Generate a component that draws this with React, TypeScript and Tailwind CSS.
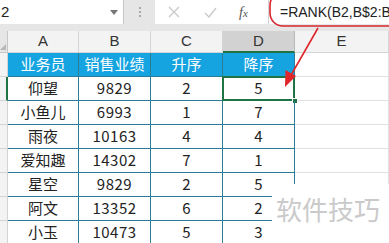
import React from 'react';

const rows = [
  ['仰望', '9829', '2', '5'],
  ['小鱼儿', '6993', '1', '7'],
  ['雨夜', '10163', '4', '4'],
  ['爱知趣', '14302', '7', '1'],
  ['星空', '9829', '2', '5'],
  ['阿文', '13352', '6', '2'],
  ['小玉', '10473', '5', '3'],
];

const font = { fontFamily: '"Noto Sans CJK SC", "Liberation Sans", sans-serif' };
const latin = { fontFamily: '"Liberation Sans", sans-serif' };

export default function App() {
  return (
    <div className="relative w-[389px] h-[243px] overflow-hidden bg-white" style={font}>
      {/* formula bar */}
      <div className="flex h-[31px] bg-[#e6e6e6] pb-[7px]">
        <div className="w-[124px] shrink-0 bg-white border-r border-[#c6c6c6] flex items-center justify-between pl-[1px] pr-[5px]">
          <span className="text-[15px] text-[#222]" style={latin}>2</span>
          <span className="w-0 h-0 border-l-[4px] border-r-[4px] border-t-[5px] border-l-transparent border-r-transparent border-t-[#777]" />
        </div>
        <div className="w-[31px] shrink-0 flex flex-col items-center justify-center gap-[2px]">
          <span className="w-[2px] h-[2px] bg-[#aaa]" />
          <span className="w-[2px] h-[2px] bg-[#aaa]" />
          <span className="w-[2px] h-[2px] bg-[#aaa]" />
        </div>
        <div className="w-[113px] shrink-0 bg-white flex items-center">
          <svg width="12" height="12" viewBox="0 0 12 12" className="ml-[13px]">
            <path d="M1 1L11 11M11 1L1 11" stroke="#c8c8c8" strokeWidth="1.3" />
          </svg>
          <svg width="13" height="11" viewBox="0 0 13 11" className="ml-[24px]">
            <path d="M1 6L5 10L12 1" stroke="#c8c8c8" strokeWidth="1.3" fill="none" />
          </svg>
          <span className="ml-[22px] text-[14px] italic text-[#555]" style={{ fontFamily: '"Liberation Serif", serif' }}>
            f<span className="text-[11px]">x</span>
          </span>
        </div>
        <div className="flex-1 min-w-0 overflow-hidden bg-white border-l border-[#d4d4d4] flex items-center pl-[11px]">
          <span className="text-[14px] text-[#222] whitespace-nowrap" style={latin}>
            =RANK(B2,B$2:B$8
          </span>
        </div>
      </div>

      {/* grid */}
      <div className="grid grid-cols-[8px_71px_72px_72px_72px_1fr] grid-rows-[22px_repeat(8,24px)]">
        <div className="bg-[#e6e6e6] border-r border-b border-[#c6c6c6] relative">
          <span className="absolute right-[1px] bottom-[2px] w-0 h-0" style={{ borderBottom: '6px solid #b7b7b7', borderLeft: '6px solid transparent' }} />
        </div>
        {['A', 'B', 'C'].map((c) => (
          <div key={c} className="bg-[#f3f3f3] border-r border-b border-[#d4d4d4] flex items-center justify-center text-[15px] text-[#333]" style={latin}>
            {c}
          </div>
        ))}
        <div className="bg-[#d2d2d2] border-r border-[#b8b8b8] border-b-2 border-b-[#217346] flex items-center justify-center text-[15px] text-[#333]" style={latin}>
          D
        </div>
        <div className="bg-[#f3f3f3] border-r border-b border-[#d4d4d4] flex items-center justify-center text-[15px] text-[#333]" style={latin}>
          E
        </div>

        {/* header row */}
        <div className="bg-[#f3f3f3] border-r border-b border-[#d4d4d4]" />
        {['业务员', '销售业绩', '升序', '降序'].map((h) => (
          <div key={h} className="bg-[#16a4e1] border-r border-b border-[#2a7d95] flex items-center justify-center text-[15px] text-white">
            {h}
          </div>
        ))}
        <div className="border-r border-b border-[#e1e1e1]" />

        {rows.map((r, i) => (
          <React.Fragment key={i}>
            <div className={`bg-[#f3f3f3] border-b border-[#d4d4d4] ${i === 0 ? 'border-r-2 border-r-[#217346]' : 'border-r border-r-[#d4d4d4]'}`} />
            {r.map((v, j) => (
              <div
                key={j}
                className={`relative border-r border-b border-[#2a7d95] flex items-center justify-center text-[15px] text-[#222] ${j === 1 ? 'tracking-[0.5px]' : ''}`}
              >
                {v}
                {i === 0 && j === 3 && (
                  <>
                    <span className="absolute -left-[1px] -top-[1px] -right-[1px] -bottom-[1px] border-2 border-[#217346]" />
                    <span className="absolute -right-[4px] -bottom-[4px] w-[6px] h-[6px] bg-[#217346] border border-white" />
                  </>
                )}
              </div>
            ))}
            <div className="border-r border-b border-[#e1e1e1]" />
          </React.Fragment>
        ))}
      </div>

      {/* watermark */}
      <div className="absolute left-[272px] top-[184px] w-[117px] h-[59px] bg-white pl-[4px] pt-[10px] text-[26px] leading-[30px] text-[#cacaca]">
        软件技巧
      </div>

      {/* annotation */}
      <svg className="absolute left-0 top-0" width="389" height="243" viewBox="0 0 389 243">
        <rect x="270" y="-8" width="140" height="34" rx="13" fill="none" stroke="#d9262c" strokeWidth="1.6" />
        <path d="M318 28L290 77" stroke="#e0262c" strokeWidth="1.6" />
        <path d="M285 87L285.5 70L296 76Z" fill="#e0262c" />
      </svg>
    </div>
  );
}
